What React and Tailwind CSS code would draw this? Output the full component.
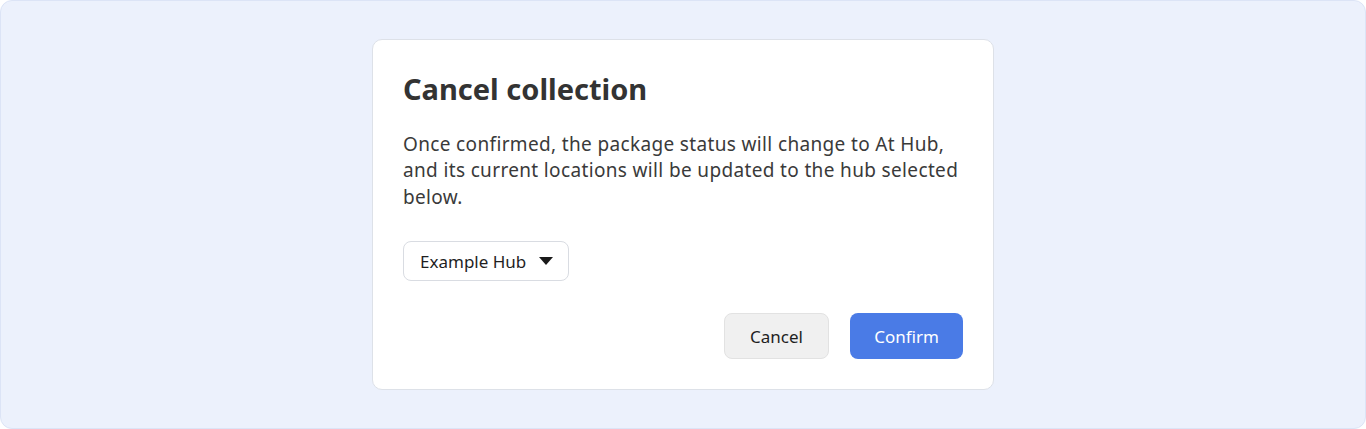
import React from "react";

const App = () => {
  return (
    <div className="h-[429px] w-full bg-white font-['Noto_Sans',sans-serif]">
      <div className="flex h-full items-center justify-center rounded-xl border border-[#dce4f6] bg-[#ecf1fc]">
        <div className="w-[622px] rounded-[10px] border border-[#dde1e8] bg-white px-[30px] pt-[29px] pb-[30px]">
          <h1 className="text-[29px] font-bold leading-[40px] text-[#333333]">Cancel collection</h1>
          <p className="mt-[22px] text-[19px] leading-[26.5px] tracking-[0.35px] text-[#3a3a3a]">
            Once confirmed, the package status will change to At Hub, and its current locations will be updated to the hub selected below.
          </p>
          <div className="mt-[31px]">
            <button className="flex h-[40px] items-center gap-[13px] rounded-lg border border-[#d9dce2] bg-white pl-[16px] pr-[15px] text-[17px] text-[#1f1f1f]">
              Example Hub
              <svg width="14" height="8" viewBox="0 0 14 8">
                <path d="M0 0h14L7 8z" fill="#1a1a1a" />
              </svg>
            </button>
          </div>
          <div className="mt-[32px] flex justify-end gap-[21px]">
            <button className="h-[46px] w-[105px] rounded-lg border border-[#e2e2e2] bg-[#f0f0f0] text-[17px] text-[#1f1f1f]">
              Cancel
            </button>
            <button className="h-[46px] w-[113px] rounded-lg bg-[#4a7be6] text-[17px] text-white">
              Confirm
            </button>
          </div>
        </div>
      </div>
    </div>
  );
};

export default App;
